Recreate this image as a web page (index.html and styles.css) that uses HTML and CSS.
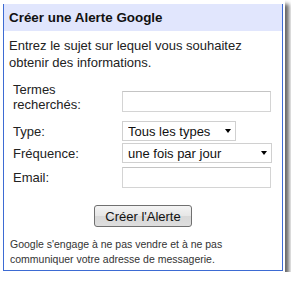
FILE: index.html
```html
<!doctype html>
<html lang="fr">
<head>
    <meta charset="UTF-8">
    <title>Créer une Alerte Google</title>
    <link rel="stylesheet" href="styles.css">
</head>
<body>
<div class="shot">
    <div class="box">
        <div class="title">Créer une Alerte Google</div>
        <p class="intro">Entrez le sujet sur lequel vous souhaitez obtenir des informations.</p>
        <div class="form">
            <div class="row first">
                <label class="lbl">Termes<br>recherchés:</label>
                <input type="text" class="field">
            </div>
            <div class="row type">
                <label class="lbl">Type:</label>
                <span class="pick small">
                    <select><option>Tous les types</option></select>
                </span>
            </div>
            <div class="row freq">
                <label class="lbl">Fréquence:</label>
                <span class="pick">
                    <select><option>une fois par jour</option></select>
                </span>
            </div>
            <div class="row mail">
                <label class="lbl">Email:</label>
                <input type="text" class="field">
            </div>
        </div>
        <div class="actions">
            <button class="btn">Créer l'Alerte</button>
        </div>
        <p class="note">Google s'engage à ne pas vendre et à ne pas communiquer votre adresse de messagerie.</p>
    </div>
</div>
</body>
</html>
```

FILE: styles.css
```css
*{
    margin: 0;
    padding: 0;
    box-sizing: border-box;
}
body{
    background: #fff;
    font-family: "Liberation Sans", Arial, sans-serif;
    color: #222;
}
.shot{
    width: 285px;
    height: 272px;
    padding: 4px 0 0 3px;
    background: #fff;
    box-shadow: 4px 4px 4px rgba(0,0,0,0.6);
}
.box{
    width: 280px;
    height: 267px;
    border: 1px solid #3d6bd3;
    border-top: none;
}
.title{
    height: 27px;
    line-height: 27px;
    padding-left: 5px;
    background: #e1e6fd;
    font-size: 13.4px;
    font-weight: bold;
    color: #111;
}
.intro{
    padding: 6px 5px 0 5px;
    font-size: 13px;
    line-height: 17px;
}
.form{
    padding: 11px 0 0 9px;
}
.row{
    display: flex;
    align-items: center;
}
.row.first{
    align-items: flex-end;
}
.lbl{
    width: 109px;
    font-size: 13px;
    line-height: 15px;
}
.row.type{ margin-top: 9px; }
.row.freq{ margin-top: 2px; }
.row.mail{ margin-top: 4px; }
.field{
    width: 149px;
    height: 21px;
    border: 1px solid #d4d4d4;
    border-top-color: #c4c4c4;
    background: #fff;
    outline: none;
}
.pick{
    position: relative;
    display: block;
    width: 150px;
    height: 20px;
}
.pick.small{
    width: 114px;
}
.pick select{
    -webkit-appearance: none;
    appearance: none;
    width: 100%;
    height: 20px;
    border: 1px solid #d0d0d0;
    background: #fff;
    padding-left: 5px;
    font-family: "Liberation Sans", Arial, sans-serif;
    font-size: 13px;
    color: #111;
    outline: none;
}
.pick::after{
    content: "";
    position: absolute;
    right: 5px;
    top: 8px;
    border-left: 3.5px solid transparent;
    border-right: 3.5px solid transparent;
    border-top: 4px solid #000;
}
.actions{
    padding-top: 17px;
    text-align: center;
}
.btn{
    width: 98px;
    height: 22px;
    border: 1px solid #707070;
    border-radius: 3px;
    background: linear-gradient(#f4f4f4, #e6e6e6 50%, #d8d8d8 51%, #dedede);
    font-family: "Liberation Sans", Arial, sans-serif;
    font-size: 13px;
    color: #111;
}
.note{
    padding: 10px 6px 0 6px;
    font-size: 10.5px;
    line-height: 15px;
    color: #333;
}
```
